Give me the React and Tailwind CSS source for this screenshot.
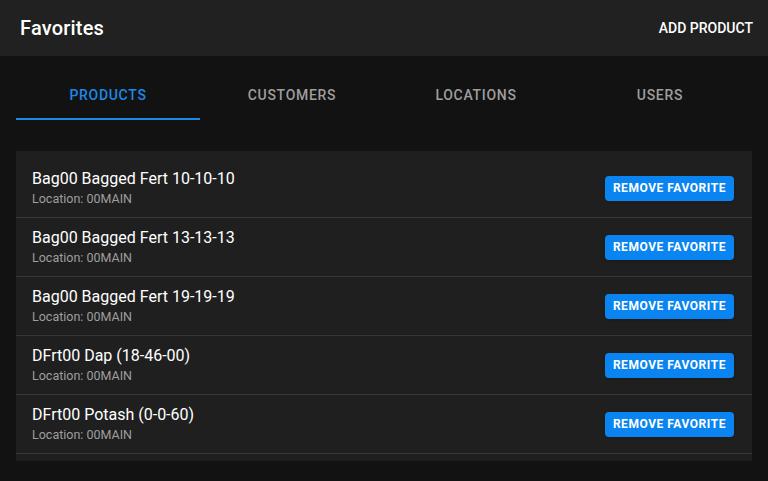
const items = [
  "Bag00 Bagged Fert 10-10-10",
  "Bag00 Bagged Fert 13-13-13",
  "Bag00 Bagged Fert 19-19-19",
  "DFrt00 Dap (18-46-00)",
  "DFrt00 Potash (0-0-60)",
];

const tabs = ["Products", "Customers", "Locations", "Users"];

export default function App() {
  return (
    <div
      className="min-h-[481px] bg-[#121212] text-white"
      style={{ fontFamily: "Roboto, 'Liberation Sans', sans-serif" }}
    >
      <header className="h-14 bg-[#212121] flex items-center justify-between pl-5 pr-[15px]">
        <h1 className="text-xl font-medium tracking-[0.01em]">Favorites</h1>
        <button className="text-sm font-medium uppercase">Add Product</button>
      </header>

      <nav className="px-4 pt-4 pb-4 flex">
        {tabs.map((t, i) => (
          <button
            key={t}
            className={
              "flex-1 h-12 text-sm font-medium uppercase tracking-[0.05em] border-b-2 " +
              (i === 0 ? "text-[#1e88e5] border-[#1e88e5]" : "text-[#9e9e9e] border-transparent")
            }
          >
            {t}
          </button>
        ))}
      </nav>

      <div className="mx-4 mt-[15px] h-[310px] overflow-hidden bg-[#1f1f1f] pt-2">
        {items.map((name) => (
          <div
            key={name}
            className="h-[59px] flex items-center justify-between pl-4 pr-[18px] border-b border-[#363636]"
          >
            <div className="flex flex-col mb-[2px]">
              <span className="text-base leading-6 text-white">{name}</span>
              <span className="text-[12.5px] leading-4 text-[#9e9e9e]">Location: 00MAIN</span>
            </div>
            <button className="h-[25px] px-2 rounded bg-[#0a84f0] text-xs font-bold uppercase tracking-[0.045em] text-white shadow">
              Remove Favorite
            </button>
          </div>
        ))}
      </div>
    </div>
  );
}
